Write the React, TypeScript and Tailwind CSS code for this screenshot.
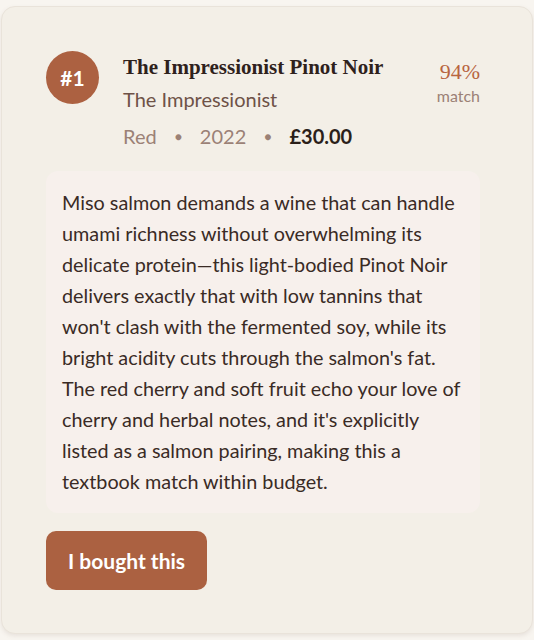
import React from "react";

export default function App() {
  return (
    <div className="w-[534px] h-[640px] bg-[#f8f5f0] pt-[6px] pl-[1px] pr-[1px] overflow-hidden" style={{ fontFamily: "Lato, 'Noto Sans', sans-serif" }}>
      <div className="w-[532px] h-[628px] rounded-[14px] bg-[#f3efe7] border border-[#e9e3da] shadow-[0_2px_4px_rgba(120,100,80,0.12)] pt-[44px] pl-[44px] pr-[52px]">
        <div className="flex items-start">
          <div className="w-[53px] h-[53px] shrink-0 rounded-full bg-[#ac6141] flex items-center justify-center text-white font-bold text-[21px]">
            #1
          </div>
          <div className="flex-1 ml-[24px]">
            <div className="text-[21px] leading-[33px] font-bold text-[#2e211c]" style={{ fontFamily: "'Liberation Serif', serif" }}>
              The Impressionist Pinot Noir
            </div>
            <div className="text-[20px] leading-[31px] text-[#6e5247]">The Impressionist</div>
            <div className="mt-[6px] flex items-center text-[20px] leading-[31px] text-[#9b8176]">
              <span>Red</span>
              <span className="mx-[18px] text-[12px]">●</span>
              <span>2022</span>
              <span className="mx-[18px] text-[12px]">●</span>
              <span className="font-bold text-[#2b1f1a]">£30.00</span>
            </div>
          </div>
          <div className="flex flex-col items-end pt-[9px]">
            <div className="text-[22px] leading-[24px] text-[#b8653f]" style={{ fontFamily: "'Liberation Serif', serif" }}>94%</div>
            <div className="text-[16px] leading-[20px] mt-[2px] text-[#9b8176]">match</div>
          </div>
        </div>
        <div className="mt-[19px] rounded-[12px] bg-[#f7f0ec] pt-[16px] pb-[16px] pl-[16px] pr-[10px] text-[19.8px] leading-[31px] text-[#3a2b25]">
          Miso salmon demands a wine that can handle umami richness without overwhelming its delicate protein—this light-bodied Pinot Noir delivers exactly that with low tannins that won't clash with the fermented soy, while its bright acidity cuts through the salmon's fat. The red cherry and soft fruit echo your love of cherry and herbal notes, and it's explicitly listed as a salmon pairing, making this a textbook match within budget.
        </div>
        <button className="mt-[18px] h-[59px] px-[22px] rounded-[10px] bg-[#ab6141] text-white font-bold text-[21px]">
          I bought this
        </button>
      </div>
    </div>
  );
}
